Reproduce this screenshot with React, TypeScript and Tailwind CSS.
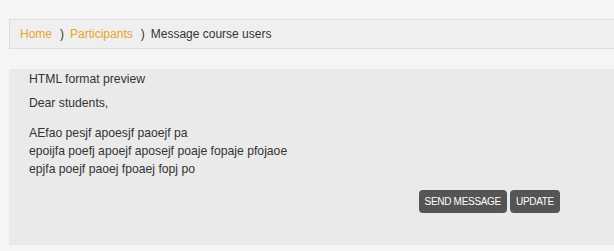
import React from "react";

const font = { fontFamily: '"Liberation Sans", Arial, sans-serif' };

function Breadcrumb() {
  return (
    <div className="ml-[9px] mt-[19px] flex h-[30px] items-center border border-r-0 border-[#dddddd] bg-[#efefef] pl-[10px] text-[12px] text-[#333333]">
      <a className="text-[#e2a62b]">Home</a>
      <span className="ml-[8px] mr-[6px]">)</span>
      <a className="text-[#e2a62b]">Participants</a>
      <span className="ml-[8px] mr-[6px]">)</span>
      <span>Message course users</span>
    </div>
  );
}

function Preview() {
  return (
    <div className="ml-[9px] mt-[20px] h-[176px] bg-[#eaeaea] pl-[20px] pr-[54px] pt-[1px] text-[12.2px] text-[#333333]">
      <div className="leading-[18px]">HTML format preview</div>
      <p className="mt-[6px] leading-[18px]">Dear students,</p>
      <p className="mt-[12px] leading-[18px]">
        AEfao pesjf apoesjf paoejf pa
        <br />
        epoijfa poefj apoejf aposejf poaje fopaje pfojaoe
        <br />
        epjfa poejf paoej fpoaej fopj po
      </p>
      <div className="mt-[12px] flex justify-end gap-[3px]">
        <button className="h-[23px] rounded-[4px] bg-[#555555] px-[6px] text-[10px] tracking-[-0.3px] text-white">
          SEND MESSAGE
        </button>
        <button className="h-[23px] rounded-[4px] bg-[#555555] px-[6px] text-[10px] tracking-[-0.3px] text-white">
          UPDATE
        </button>
      </div>
    </div>
  );
}

export default function App() {
  return (
    <div className="h-[251px] w-[614px] overflow-hidden bg-[#f5f5f5]" style={font}>
      <Breadcrumb />
      <Preview />
    </div>
  );
}
